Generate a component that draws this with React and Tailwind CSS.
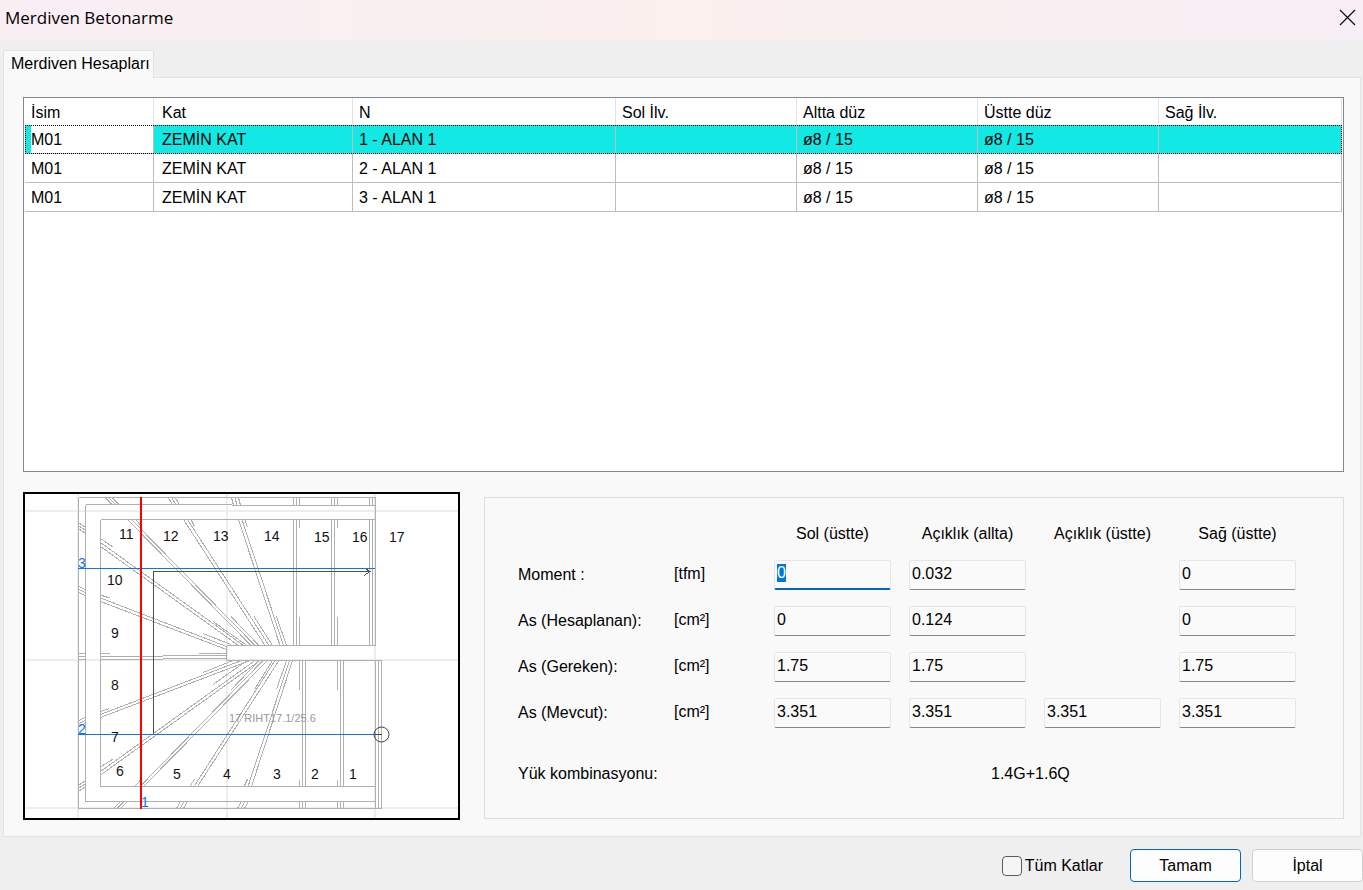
import { useEffect, useRef, useState } from 'react';

const COLUMNS = ['İsim', 'Kat', 'N', 'Sol İlv.', 'Altta düz', 'Üstte düz', 'Sağ İlv.'];

const ROWS = [
    ['M01', 'ZEMİN KAT', '1 - ALAN 1', '', 'ø8 / 15', 'ø8 / 15', ''],
    ['M01', 'ZEMİN KAT', '2 - ALAN 1', '', 'ø8 / 15', 'ø8 / 15', ''],
    ['M01', 'ZEMİN KAT', '3 - ALAN 1', '', 'ø8 / 15', 'ø8 / 15', ''],
];

const FIELD_HEADERS = ['Sol (üstte)', 'Açıklık (allta)', 'Açıklık (üstte)', 'Sağ (üstte)'];

const FIELDS = [
    { id: 'moment', label: 'Moment :', unit: '[tfm]', values: ['0', '0.032', null, '0'] },
    { id: 'hesaplanan', label: 'As (Hesaplanan):', unit: '[cm²]', values: ['0', '0.124', null, '0'] },
    { id: 'gereken', label: 'As (Gereken):', unit: '[cm²]', values: ['1.75', '1.75', null, '1.75'] },
    { id: 'mevcut', label: 'As (Mevcut):', unit: '[cm²]', values: ['3.351', '3.351', '3.351', '3.351'] },
];

// Plan lines as [x1, y1, x2, y2]
const WALLS = [
    [53.5, 3.5, 350.5, 3.5], [53.5, 3.5, 53.5, 314.5], [53.5, 314.5, 356.5, 314.5],
    [60.5, 10.5, 206.5, 10.5], [206.5, 11.5, 350.5, 11.5], [60.5, 10.5, 60.5, 307.5], [60.5, 307.5, 350.5, 307.5],
    [75.5, 25.5, 350.5, 25.5], [75.5, 25.5, 75.5, 292.5], [75.5, 292.5, 350.5, 292.5],
    [350.5, 3.5, 350.5, 151.5], [350.5, 166.5, 350.5, 314.5],
    [353.5, 166.5, 353.5, 314.5], [356.5, 166.5, 356.5, 314.5],
    [201.5, 151.5, 350.5, 151.5], [201.5, 166.5, 356.5, 166.5], [201.5, 151.5, 201.5, 166.5],
];

const STEPS = [
    // straight flight, upper
    [268.5, 25.5, 268.5, 151.5], [271.5, 25.5, 271.5, 151.5], [274.5, 25.5, 274.5, 33.5], [274.5, 122.5, 274.5, 151.5],
    [306.5, 25.5, 306.5, 151.5], [309.5, 25.5, 309.5, 151.5], [312.5, 25.5, 312.5, 33.5], [312.5, 122.5, 312.5, 151.5],
    [344.5, 25.5, 344.5, 151.5], [347.5, 25.5, 347.5, 151.5],
    // straight flight, lower
    [274.5, 166.5, 274.5, 195.5], [274.5, 285.5, 274.5, 292.5], [277.5, 166.5, 277.5, 292.5], [280.5, 166.5, 280.5, 292.5],
    [312.5, 166.5, 312.5, 195.5], [312.5, 285.5, 312.5, 292.5], [315.5, 166.5, 315.5, 292.5], [318.5, 166.5, 318.5, 292.5],
    // winders, upper
    [213.5, 25.5, 255, 151.5], [217, 25.5, 258.5, 151.5], [220, 25.5, 222.5, 33.5], [251.5, 122.5, 261.5, 151.5],
    [158.5, 25.5, 240, 151.5], [162.5, 25.5, 244, 151.5], [166, 25.5, 169.5, 32.5], [229, 122.5, 247.5, 151.5],
    [102.5, 25.5, 226, 151.5], [106.5, 25.5, 230, 151.5], [110.5, 25.5, 115.5, 31], [206, 122.5, 234, 151.5],
    [75.5, 48.5, 218.5, 151.5], [75.5, 52.5, 213.5, 151.5], [75.5, 44.5, 88, 53], [188, 127.5, 222, 151.5],
    [75.5, 104, 201.5, 152.5], [75.5, 107.5, 201.5, 155.5], [75.5, 101, 84.5, 104], [178, 139.5, 206, 150.5],
    // middle step
    [75.5, 159.5, 84.5, 159.5], [173.5, 159.5, 201.5, 159.5],
    [75.5, 162.5, 138, 162.5], [75.5, 165.5, 138, 165.5], [138, 161.5, 201.5, 161.5], [138, 164.5, 201.5, 164.5],
    // winders, lower
    [75.5, 220.5, 216.5, 166.5], [75.5, 223.5, 225, 166.5], [75.5, 217.5, 84.5, 214.5], [178, 178.5, 208, 166.5],
    [75.5, 277.5, 230, 166.5], [75.5, 281, 235, 166.5], [75.5, 273, 88, 265], [188, 190.5, 222, 166.5],
    [115, 292.5, 238, 166.5], [118.5, 292.5, 242.5, 166.5], [110, 292.5, 115.5, 286], [206, 196, 234, 166.5],
    [169, 292.5, 250, 166.5], [172.5, 292.5, 254, 166.5], [165, 292.5, 169.5, 285.5], [229.5, 195.5, 247.5, 166.5],
    [223, 292.5, 264.5, 166.5], [226.5, 292.5, 267.5, 166.5], [219, 292.5, 222.5, 285.5], [251.5, 195.5, 261.5, 166.5],
];

// Short marks inside the wall: [x1, y1, x2, y2, dx, dy], repeated three times
const MARKS = [
    [80, 3.5, 87, 10.5, 3.5, 0], [143, 3.5, 147.5, 10.5, 3.5, 0], [206.5, 3.5, 208.5, 11.5, 3.5, 0],
    [268.5, 3.5, 268.5, 11.5, 3, 0], [306.5, 3.5, 306.5, 11.5, 3, 0], [344.5, 3.5, 344.5, 11.5, 3, 0],
    [53.5, 28.5, 60.5, 33.5, 0, 3], [53.5, 92.5, 60.5, 95.5, 0, 3], [53.5, 159.5, 60.5, 159.5, 0, 3],
    [53.5, 226.5, 60.5, 223.5, 0, 3], [53.5, 291.5, 60.5, 286.5, 0, 3],
    [88.5, 314.5, 95.5, 307.5, 3.5, 0], [151.5, 314.5, 155.5, 307.5, 3.5, 0], [212.5, 314.5, 216.5, 307.5, 3.5, 0],
    [274.5, 307.5, 274.5, 314.5, 3, 0], [312.5, 307.5, 312.5, 314.5, 3, 0],
];

const STEP_NUMBERS = [
    [324, 285, 1], [286, 285, 2], [248, 285, 3], [198, 285, 4], [148, 285, 5], [91, 282, 6], [86, 248, 7], [86, 196, 8],
    [86, 144, 9], [82, 91, 10], [94, 45, 11], [138, 47, 12], [188, 47, 13], [239, 47, 14], [289, 48, 15], [327, 48, 16], [364, 48, 17],
];

function toPath(lines) {
    return lines.map(([x1, y1, x2, y2]) => `M${x1} ${y1}L${x2} ${y2}`).join('');
}

function StairPlan() {
    const marks = MARKS.flatMap(([x1, y1, x2, y2, dx, dy]) =>
        [0, 1, 2].map((i) => [x1 + dx * i, y1 + dy * i, x2 + dx * i, y2 + dy * i])
    );

    return (
        <svg viewBox="0 0 433 324" className="block w-full" role="img" aria-label="Merdiven planı" fill="none">
            <g shapeRendering="crispEdges">
                <path d="M0 17H433M0 166H433M0 314H433M53 0V324M202 0V324M350 0V324" stroke="#ededed" strokeWidth="2" />
                <path d={toPath([...WALLS, ...STEPS, ...marks])} stroke="#b0b0b0" />
            </g>
            <text x="204" y="228" fontSize="11" fill="#999999">17 RIHT17.1/25.6</text>
            <g shapeRendering="crispEdges">
                <path d="M128.5 240V77.5H345M340 74.5L345 77.5L339 81.5" stroke="#505050" />
                <path d="M53 74.5H350M53 240.5H350" stroke="#0a74f5" />
                <path d="M350 240.5H357" stroke="#404040" />
                <path d="M116 3V315" stroke="#ff0000" strokeWidth="2" />
            </g>
            <circle cx="356.5" cy="240.5" r="7.5" stroke="#404040" />
            <g fontSize="14" fill="#111111">
                {STEP_NUMBERS.map(([x, y, n]) => (
                    <text key={n} x={x} y={y}>{n}</text>
                ))}
            </g>
            <g fontSize="14" fill="#0a74f5">
                <text x="53" y="74">3</text>
                <text x="53" y="240">2</text>
                <text x="116" y="313">1</text>
            </g>
        </svg>
    );
}

function StairTable({ selected, onSelect }) {
    return (
        <table className="w-full table-fixed border-separate border-spacing-0 text-left">
            <colgroup>
                <col className="w-[129px]" />
                <col className="w-[199px]" />
                <col className="w-[263px]" />
                <col className="w-[181px]" />
                <col className="w-[181px]" />
                <col className="w-[181px]" />
                <col />
            </colgroup>
            <thead>
                <tr className="h-[27px]">
                    {COLUMNS.map((name) => (
                        <th
                            key={name}
                            className="border-r border-[#e2e2e2] pt-[2px] pb-0 pl-[6px] font-normal nth-2:pl-2"
                        >
                            {name}
                        </th>
                    ))}
                </tr>
            </thead>
            <tbody>
                {ROWS.map((row, i) => (
                    <tr
                        key={row[2]}
                        onClick={() => onSelect(i)}
                        className={
                            i === selected
                                ? 'h-[29px] bg-[#12e8e4] outline-1 -outline-offset-1 outline-dotted outline-black'
                                : 'h-[29px]'
                        }
                    >
                        {row.map((cell, j) => (
                            <td
                                key={j}
                                className={
                                    i === selected && j === 0
                                        ? 'border-r border-b border-l-[6px] border-[#bdbdbd] border-l-[#12e8e4] bg-white px-0 pt-[2px] pb-0'
                                        : 'border-r border-b border-[#bdbdbd] pt-[2px] pb-0 pl-[6px] nth-2:pl-2'
                                }
                            >
                                {cell}
                            </td>
                        ))}
                    </tr>
                ))}
            </tbody>
        </table>
    );
}

function ResultForm() {
    const firstInput = useRef(null);

    useEffect(() => {
        firstInput.current.focus();
        firstInput.current.select();
    }, []);

    return (
        <div className="mt-[5px] grid flex-1 grid-cols-[138px_82px_repeat(4,117px)] content-start gap-x-[18px] gap-y-4 border border-[#dcdcdc] pt-[25px] pb-8 pl-[33px]">
            <div className="col-span-2" />
            {FIELD_HEADERS.map((name) => (
                <div key={name} className="pt-px text-center leading-5 whitespace-nowrap">{name}</div>
            ))}

            {FIELDS.map((field, row) => (
                <div key={field.id} className="col-span-6 grid grid-cols-subgrid items-center">
                    <label htmlFor={`${field.id}-0`} className="whitespace-nowrap">{field.label}</label>
                    <span className="pb-[3px]">{field.unit}</span>
                    {field.values.map((value, col) =>
                        value === null ? (
                            <span key={col} />
                        ) : (
                            <input
                                key={col}
                                id={`${field.id}-${col}`}
                                ref={row === 0 && col === 0 ? firstInput : null}
                                aria-label={`${field.label} ${FIELD_HEADERS[col]}`}
                                defaultValue={value}
                                className="h-[30px] w-full rounded-xs border border-[#e6e6e6] border-b-[#868686] bg-[#fafafa] px-[2px] pb-[3px] outline-none selection:bg-[#0078d7] selection:text-white focus:border-b-2 focus:border-b-[#0067c0]"
                            />
                        )
                    )}
                </div>
            ))}

            <div className="col-span-6 grid grid-cols-subgrid pt-[18px]">
                <span className="whitespace-nowrap">Yük kombinasyonu:</span>
                <output className="col-span-3 col-start-4 pl-[82px]">1.4G+1.6Q</output>
            </div>
        </div>
    );
}

export default function App() {
    const [selected, setSelected] = useState(0);

    return (
        <div className="flex min-h-screen flex-col bg-[#efefef] font-['Liberation_Sans',Arial,sans-serif] text-base text-black">
            <header className="flex h-10 items-center justify-between bg-linear-to-r from-[#f9eef4] via-[#fbf0ee] to-[#f8eef5] pr-[7px] pl-[5px]">
                <h1 className="pb-1 font-['Open_Sans','Noto_Sans',sans-serif] text-[17px]">Merdiven Betonarme</h1>
                <button type="button" aria-label="Kapat" className="pb-[5px]">
                    <svg viewBox="0 0 17 17" className="size-[17px]" stroke="#111111" strokeWidth="1.3" fill="none">
                        <path d="M1 1L16 16M16 1L1 16" />
                    </svg>
                </button>
            </header>

            <main className="flex flex-1 flex-col pt-[10px] pr-[2px] pl-[3px]">
                <div role="tablist" className="flex">
                    <button
                        type="button"
                        role="tab"
                        aria-selected="true"
                        className="z-10 -mb-px h-7 border border-b-0 border-[#e3e3e3] bg-[#f9f9f9] pr-[3px] pb-[2px] pl-[7px]"
                    >
                        Merdiven Hesapları
                    </button>
                </div>

                <section className="flex flex-1 flex-col gap-5 border border-[#e3e3e3] bg-[#f9f9f9] pt-[19px] pr-4 pb-4 pl-[19px]">
                    <div className="min-h-60 flex-1 border border-[#828790] bg-white px-px">
                        <StairTable selected={selected} onSelect={setSelected} />
                    </div>
                    <div className="flex items-start gap-6">
                        <div className="w-[437px] shrink-0 border-2 border-black bg-white">
                            <StairPlan />
                        </div>
                        <ResultForm />
                    </div>
                </section>
            </main>

            <footer className="flex items-center justify-end pt-3 pb-2">
                <label className="mr-[27px] flex items-center gap-[3px]">
                    <input type="checkbox" className="size-5 appearance-none rounded border border-[#5c5c5c] bg-[#f5f5f5] checked:bg-[#0067c0]" />
                    Tüm Katlar
                </label>
                <button type="button" className="mr-[11px] h-[33px] w-[111px] rounded border border-[#0067c0] bg-[#fdfdfd]">Tamam</button>
                <button type="button" className="h-[33px] w-[111px] rounded border border-[#d0d0d0] bg-[#fdfdfd]">İptal</button>
            </footer>
        </div>
    );
}
